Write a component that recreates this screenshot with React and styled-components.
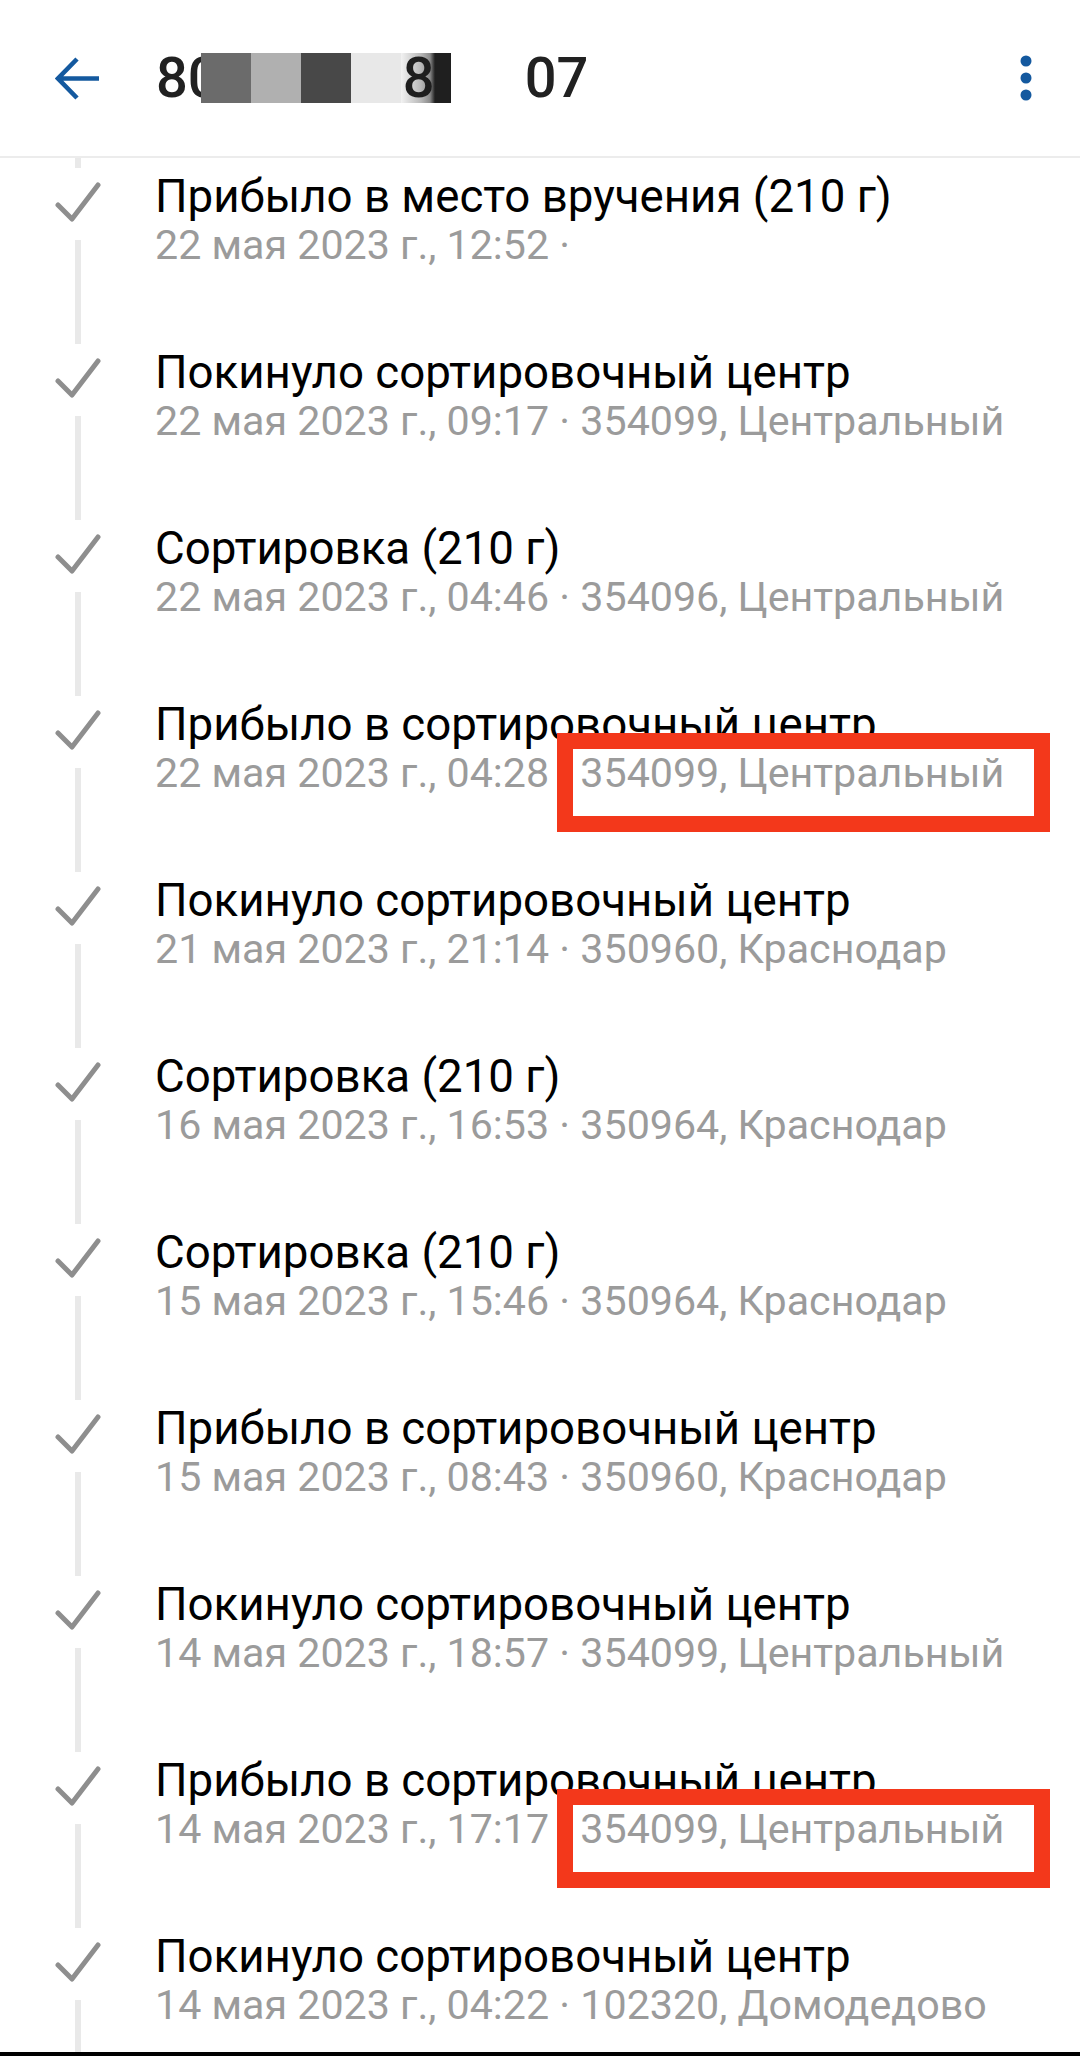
import React from 'react';
import styled, { createGlobalStyle } from 'styled-components';

const GlobalStyle = createGlobalStyle`
  html, body {
    margin: 0;
    padding: 0;
    background: #ffffff;
  }
  body {
    font-family: Roboto, 'Noto Sans', 'Liberation Sans', sans-serif;
  }
`;

const Screen = styled.div`
  width: 1080px;
  height: 2056px;
  display: flex;
  flex-direction: column;
  overflow: hidden;
  background: #ffffff;
`;

const Header = styled.header`
  height: 156px;
  flex: none;
  display: flex;
  align-items: center;
  padding: 0 48px 0 55px;
  border-bottom: 2px solid #ececec;
`;

const IconButton = styled.button`
  border: 0;
  background: none;
  padding: 0;
  display: flex;
  align-items: center;
  justify-content: center;
  color: #14599f;
`;

const Title = styled.h1`
  flex: 1;
  margin: 0 0 0 56px;
  display: flex;
  align-items: center;
  font-size: 56px;
  font-weight: 500;
  color: #212121;
  letter-spacing: 0;
  line-height: 50px;
`;

const Mosaic = styled.span`
  display: flex;
  height: 50px;
  margin-left: -19px;
`;

const Tile = styled.span`
  width: 50px;
  height: 50px;
  display: flex;
  align-items: center;
  justify-content: flex-start;
  padding-left: 2px;
  box-sizing: border-box;
  background: ${({ $bg }) => $bg};
  color: #1e1e1e;
`;

const Ghost = styled.span`
  width: 74px;
`;

const List = styled.main`
  flex: 1;
  overflow: hidden;
`;

const Row = styled.div`
  position: relative;
  height: 176px;
  display: grid;
  grid-template-columns: 155px 1fr;
`;

const Rail = styled.div`
  display: flex;
  flex-direction: column;
  align-items: center;
`;

const Segment = styled.span`
  width: 6px;
  background: #e9e9e9;
  height: ${({ $h }) => ($h ? `${$h}px` : 'auto')};
  flex: ${({ $h }) => ($h ? 'none' : '1')};
`;

const CheckIcon = styled.svg`
  margin: 14px 0 18px;
  flex: none;
`;

const Body = styled.div`
  padding-top: 13px;
  display: flex;
  flex-direction: column;
`;

const EventTitle = styled.div`
  font-size: 45.65px;
  line-height: 52px;
  color: #000000;
  white-space: nowrap;
`;

const EventMeta = styled.div`
  font-size: 41.2px;
  line-height: 44px;
  color: #9b9b9b;
  white-space: nowrap;
`;

const Highlight = styled.span`
  position: absolute;
  left: 557px;
  top: 47px;
  width: 493px;
  height: 99px;
  box-sizing: border-box;
  border: 16px solid #f3381b;
  pointer-events: none;
`;

const Bar = styled.div`
  height: 4px;
  flex: none;
  background: #000000;
`;

const events = [
  ['Прибыло в место вручения (210 г)', '22 мая 2023 г., 12:52 ·'],
  ['Покинуло сортировочный центр', '22 мая 2023 г., 09:17 · 354099, Центральный'],
  ['Сортировка (210 г)', '22 мая 2023 г., 04:46 · 354096, Центральный'],
  ['Прибыло в сортировочный центр', '22 мая 2023 г., 04:28 · 354099, Центральный', true],
  ['Покинуло сортировочный центр', '21 мая 2023 г., 21:14 · 350960, Краснодар'],
  ['Сортировка (210 г)', '16 мая 2023 г., 16:53 · 350964, Краснодар'],
  ['Сортировка (210 г)', '15 мая 2023 г., 15:46 · 350964, Краснодар'],
  ['Прибыло в сортировочный центр', '15 мая 2023 г., 08:43 · 350960, Краснодар'],
  ['Покинуло сортировочный центр', '14 мая 2023 г., 18:57 · 354099, Центральный'],
  ['Прибыло в сортировочный центр', '14 мая 2023 г., 17:17 · 354099, Центральный', true],
  ['Покинуло сортировочный центр', '14 мая 2023 г., 04:22 · 102320, Домодедово'],
];

function Check() {
  return (
    <CheckIcon width="46" height="40" viewBox="0 0 46 40">
      <polyline
        points="3,23 17,37 43,3"
        fill="none"
        stroke="#8e8e8e"
        strokeWidth="5"
        strokeLinecap="round"
        strokeLinejoin="round"
      />
    </CheckIcon>
  );
}

function TrackEvent({ title, meta, marked }) {
  return (
    <Row>
      <Rail>
        <Segment $h={10} />
        <Check />
        <Segment />
      </Rail>
      <Body>
        <EventTitle>{title}</EventTitle>
        <EventMeta>{meta}</EventMeta>
      </Body>
      {marked && <Highlight />}
    </Row>
  );
}

export default function App() {
  return (
    <Screen>
      <GlobalStyle />
      <Header>
        <IconButton aria-label="Назад">
          <svg width="45" height="45" viewBox="0 0 45 45">
            <path
              d="M22 3 L3 22.5 L22 42 M3 22.5 H44"
              fill="none"
              stroke="currentColor"
              strokeWidth="4.6"
            />
          </svg>
        </IconButton>
        <Title>
          80
          <Mosaic>
            <Tile $bg="#6b6b6b" />
            <Tile $bg="#b0b0b0" />
            <Tile $bg="#484848" />
            <Tile $bg="#e8e8e8" />
            <Tile $bg="linear-gradient(90deg, #f2f2f2 0%, #b8b8b8 40%, #8a8a8a 58%, #1f1f1f 68%, #1f1f1f 100%)">8</Tile>
          </Mosaic>
          <Ghost />
          07
        </Title>
        <IconButton aria-label="Меню">
          <svg width="12" height="46" viewBox="0 0 12 46">
            <circle cx="6" cy="6" r="5.5" fill="currentColor" />
            <circle cx="6" cy="23" r="5.5" fill="currentColor" />
            <circle cx="6" cy="40" r="5.5" fill="currentColor" />
          </svg>
        </IconButton>
      </Header>
      <List>
        {events.map(([title, meta, marked], i) => (
          <TrackEvent key={i} title={title} meta={meta} marked={marked} />
        ))}
      </List>
      <Bar />
    </Screen>
  );
}
